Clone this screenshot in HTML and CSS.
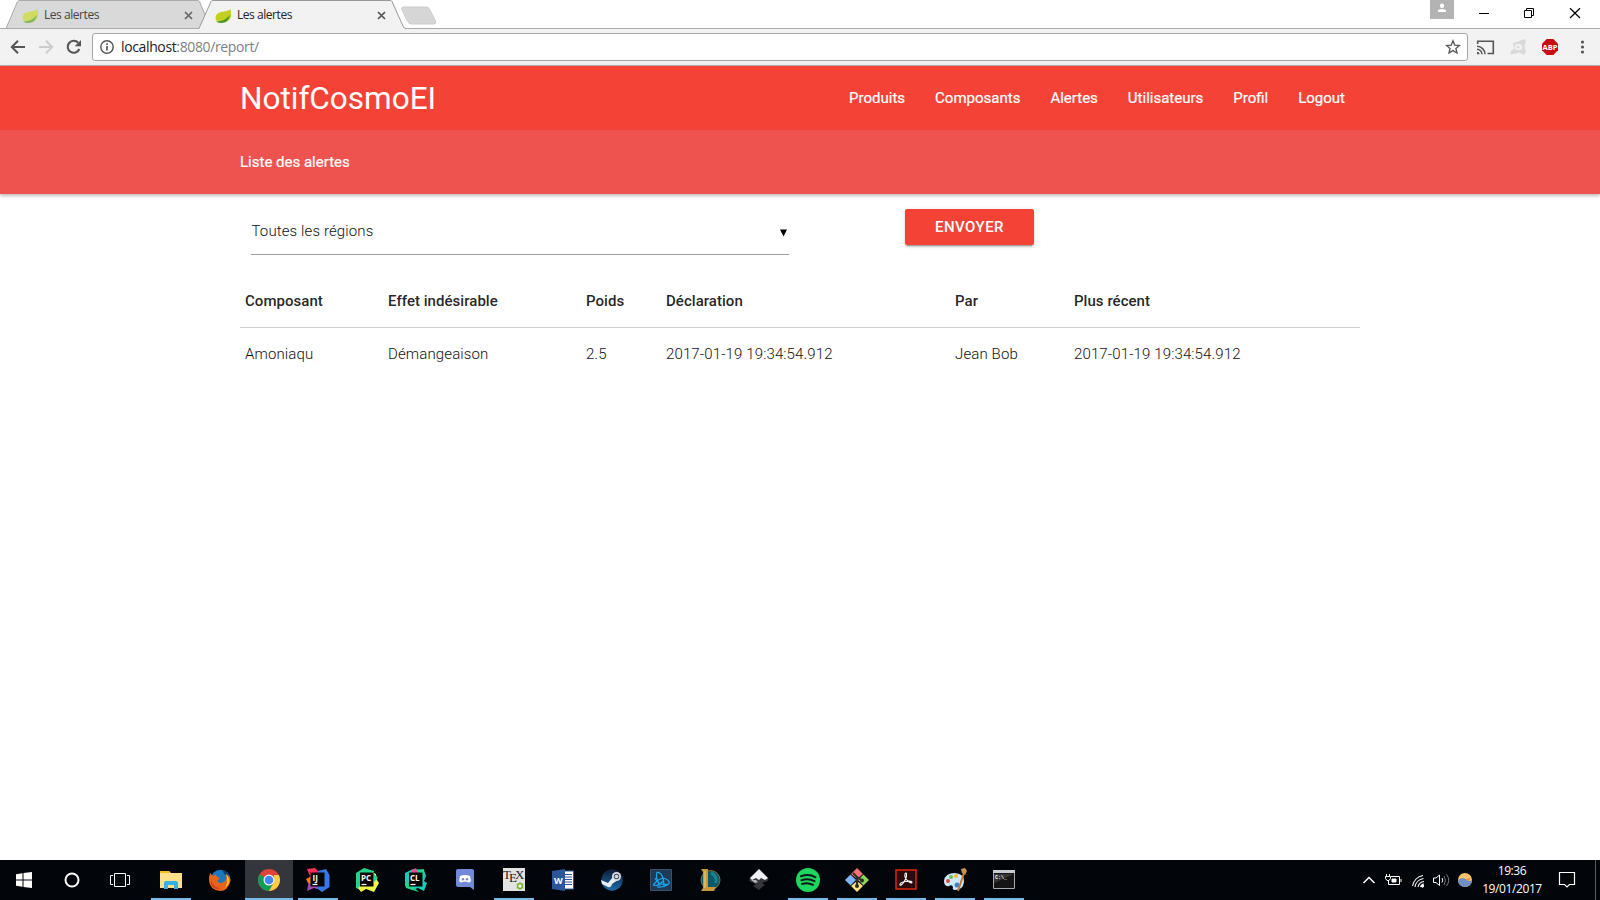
FILE: index.html
```html
<!DOCTYPE html>
<html lang="fr">
<head>
<meta charset="utf-8">
<title>Les alertes</title>
<link rel="stylesheet" href="styles.css">
</head>
<body>
<div class="browser">
  <div class="tabstrip">
    <svg class="tab-shapes" width="450" height="29" viewBox="0 0 450 29">
      <path d="M0 28.5H450" stroke="#aaa"/>
      <path d="M401.500 9q0-2 2-2h23q2 0 3 2l6 12q1 3-2 3h-22q-3 0-4-3z" fill="#d6d6d6" stroke="#ccc"/>
      <path d="M6 28.500L17.500 1.500Q18 .5 20 .5H197Q199 .5 199.500 1.500L208 22L201 28.500z" fill="#d9d9d9" stroke="#aaa"/>
      <path d="M199 28.500L211 1.500Q211.500 .5 213 .5H390Q391.500 .5 392 1.500L403 26Q404 28.500 406 28.500V30H199z" fill="#f2f2f2"/>
      <path d="M199 28.500L211 1.500Q211.500 .5 213 .5H390Q391.500 .5 392 1.500L403 26Q404 28.500 406 28.500" fill="none" stroke="#999"/>
    </svg>
    <div class="tab tab-back">
      <svg class="leaf" width="17" height="16" viewBox="0 0 17 16"><path d="M15.500 1C14 3 10 3 6 4C-1 6 0 12 2 13C8 16 14 14 15.800 9Q16.600 5 15.500 1z" fill="#d0dc62"/><path d="M1 13.500Q9 14 15 7Q14 14 7 15Q3 15 1 13.500z" fill="#84b763"/></svg>
      <span class="tab-title">Les alertes</span>
      <svg class="tab-close" width="9" height="9" viewBox="0 0 9 9"><path d="M1 1L8 8M8 1L1 8" stroke="#666" stroke-width="1.700"/></svg>
    </div>
    <div class="tab">
      <svg class="leaf" width="17" height="16" viewBox="0 0 17 16"><path d="M15.500 1C14 3 10 3 6 4C-1 6 0 12 2 13C8 16 14 14 15.800 9Q16.600 5 15.500 1z" fill="#c3d020"/><path d="M1 13.500Q9 14 15 7Q14 14 7 15Q3 15 1 13.500z" fill="#4c9a25"/></svg>
      <span class="tab-title">Les alertes</span>
      <svg class="tab-close" width="9" height="9" viewBox="0 0 9 9"><path d="M1 1L8 8M8 1L1 8" stroke="#555" stroke-width="1.700"/></svg>
    </div>
    <div class="window-controls">
      <svg width="170" height="28" viewBox="0 0 170 28">
        <path d="M0 0H24V19H0z" fill="#b3b3b3"/><circle cx="12" cy="5.800" r="2.200" fill="#fff"/><path d="M8 12V10.500Q8.500 9 12 9Q15.500 9 16 10.500V12z" fill="#fff"/>
        <path d="M49 13.500H59" stroke="#000"/>
        <path d="M94.500 10.500H101.500V17.500H94.500zM96.500 10V8.500H103.500V15.500H102" fill="none" stroke="#000"/>
        <path d="M140 8.200L150 18M150 8.200L140 18" stroke="#000" stroke-width="1.200"/>
      </svg>
    </div>
  </div>
  <div class="toolbar">
    <svg class="nav-icons" width="92" height="36" viewBox="0 0 92 36">
      <path d="M25 18H12.500M18 11.800L11.800 18L18 24.200" fill="none" stroke="#555" stroke-width="2"/>
      <path d="M39 18H51.500M46 11.800L52.200 18L46 24.200" fill="none" stroke="#ccc" stroke-width="2"/>
      <path d="M79.300 20A6 6 0 1 1 78.200 13.800" fill="none" stroke="#555" stroke-width="2.100"/><path d="M81 11V17.300H74.700z" fill="#555"/>
    </svg>
    <div class="omnibox">
      <svg width="14" height="14" viewBox="0 0 14 14"><circle cx="7" cy="7" r="6.200" fill="none" stroke="#555" stroke-width="1.400"/><path d="M7 6V10.500M7 3.300V5" stroke="#555" stroke-width="1.700"/></svg>
      <span class="url"><span class="host">localhost</span>:8080/report/</span>
      <svg class="star" width="16" height="16" viewBox="0 0 16 16"><path d="M8 1.800L9.800 6.100L14.400 6.500L10.900 9.500L12 14L8 11.600L4 14L5.100 9.500L1.600 6.500L6.200 6.100z" fill="none" stroke="#555" stroke-width="1.300"/></svg>
    </div>
    <svg class="extensions" width="132" height="36" viewBox="0 0 132 36">
      <path d="M9.700 15V12.300H25.300V24.500H19.500" fill="none" stroke="#555" stroke-width="1.600"/><path d="M9 17.300A8 8 0 0 1 17 25.300M9 20.200A5 5 0 0 1 14 25.300" fill="none" stroke="#555" stroke-width="1.500"/><path d="M9 22.800A2.500 2.500 0 0 1 11.500 25.300H9z" fill="#555"/>
      <path d="M45 14L50 12.500L56 10L58 12L56.500 17L58 23L56 26L51 23.500L46 25L42.500 25.500L43 22L46 20z" fill="#dadada"/><circle cx="50" cy="18" r="2.300" fill="none" stroke="#f6f6f6" stroke-width="1.400"/><path d="M53 15.500V20.500" stroke="#f6f6f6" stroke-width="1.400"/>
      <path d="M78.700 10H85.300L90 14.700V21.300L85.300 26H78.700L74 21.300V14.700z" fill="#c70d0d"/>
      <text x="82" y="21" text-anchor="middle" class="abp">ABP</text>
      <g fill="#555"><circle cx="114.500" cy="13" r="1.600"/><circle cx="114.500" cy="18" r="1.600"/><circle cx="114.500" cy="23" r="1.600"/></g>
    </svg>
  </div>
</div>

<div class="page">
  <header class="header">
    <nav class="navbar"><div class="container navbar-inner">
      <a class="logo">NotifCosmoEI</a>
      <ul class="menu"><li>Produits</li><li>Composants</li><li>Alertes</li><li>Utilisateurs</li><li>Profil</li><li>Logout</li></ul>
    </div></nav>
    <div class="subbar"><div class="container">Liste des alertes</div></div>
  </header>
  <main class="container">
    <form class="filters">
      <div class="select"><span>Toutes les régions</span><svg width="7" height="8" viewBox="0 0 7 8"><path d="M0 .5H7L3.500 7.500z"/></svg></div>
      <button type="button" class="send">ENVOYER</button>
    </form>
    <table class="alerts">
      <colgroup><col class="c1"><col class="c2"><col class="c3"><col class="c4"><col class="c5"><col></colgroup>
      <thead><tr><th>Composant</th><th>Effet indésirable</th><th>Poids</th><th>Déclaration</th><th>Par</th><th>Plus récent</th></tr></thead>
      <tbody><tr><td>Amoniaqu</td><td>Démangeaison</td><td>2.5</td><td>2017-01-19 19:34:54.912</td><td>Jean Bob</td><td>2017-01-19 19:34:54.912</td></tr></tbody>
    </table>
  </main>
</div>

<footer class="taskbar">
  <div class="system">
    <div class="item"><svg width="24" height="24" viewBox="0 0 24 24" fill="#fff"><path d="M4 6.200L10.500 5.300V11.500H4zM11.500 5.100L20 4V11.500H11.500zM4 12.500H10.500V18.700L4 17.800zM11.500 12.500H20V20L11.500 18.900z"/></svg></div>
    <div class="item"><svg width="24" height="24" viewBox="0 0 24 24"><circle cx="12" cy="12" r="6.500" fill="none" stroke="#fff" stroke-width="2"/></svg></div>
    <div class="item"><svg width="24" height="24" viewBox="0 0 24 24" fill="none" stroke="#fff"><path d="M6.500 5.500H17.500V18.500H6.500zM5 7.500H2.500V16.500H5M19 7.500H21.500V16.500H19"/></svg></div>
  </div>
  <div class="apps">
    <div class="item open"><svg width="24" height="24" viewBox="0 0 24 24"><path d="M1 3H10L12 5H23V20H1z" fill="#ffe08a"/><path d="M1 3H10L11 5H1z" fill="#f2bd20"/><path d="M5 21V15Q5 13 7 13H17Q19 13 19 15V21H15V17H9V21z" fill="#35b1e8"/></svg></div>
    <div class="item"><svg width="24" height="24" viewBox="0 0 24 24"><circle cx="12.500" cy="11.500" r="9.800" fill="#1778bd"/><path d="M14 2Q20 3 21 9L17 7z" fill="#123e78"/><path d="M2 5L5 8L8 6Q8 9 12 10L9 13Q13 17 17 13Q20 9 17 6Q23 8 22.500 13Q20 23 12 23Q2 22 1 13Q1 8 2 5z" fill="#e7651b"/><path d="M18 6Q25 13 17 20Q21 14 18 6z" fill="#ffc534"/><path d="M3 12Q5 20 13 20Q7 23 3 17z" fill="#d6401d"/></svg></div>
    <div class="item open active"><svg width="24" height="24" viewBox="0 0 24 24"><circle cx="12" cy="12" r="11" fill="#db4437"/><path d="M12 12L2.500 6.500A11 11 0 0 0 12 23L17 15z" fill="#0f9d58"/><path d="M12 23L17 14V7H21.800A11 11 0 0 1 12 23z" fill="#ffcd40"/><circle cx="12" cy="12" r="5.500" fill="#f1f1f1"/><circle cx="12" cy="12" r="4.300" fill="#4285f4"/></svg></div>
    <div class="item open"><svg width="24" height="24" viewBox="0 0 24 24"><path d="M1 1L9 0L13 4V12H2L4 8z" fill="#fc3159"/><path d="M12 3L20 1L23.500 7V19L16 24L9 19L12 10z" fill="#3678e8"/><path d="M3 11L12 14L11 21L8 20L1 23L2 18z" fill="#a54ab4"/><path d="M0 11L6 8V16L2 15z" fill="#f97a12"/><path d="M4.500 4.500H18.500V18.500H4.500z" fill="#080406"/><path d="M6.500 16.500H11.500" stroke="#fff" stroke-width="1.200"/><text x="6.500" y="12.500" class="ide">IJ</text></svg></div>
    <div class="item"><svg width="24" height="24" viewBox="0 0 24 24"><path d="M1 5L9 0L19 3L18 12L6 22L1 20z" fill="#20d789"/><path d="M17 4L21 6L22 12L24 15L19 24L11 21L6 24L3 20L12 12z" fill="#eef54a"/><path d="M18 5L23 10L19 14z" fill="#21d789"/><path d="M5 4.500H18.500V18.500H5z" fill="#080406"/><path d="M6.500 16.500H11.500" stroke="#fff" stroke-width="1.200"/><text x="6" y="12.500" class="ide">PC</text></svg></div>
    <div class="item"><svg width="24" height="24" viewBox="0 0 24 24"><path d="M1 5L9 1L20 2L22 8L20 13L23 15L20 23L14 20L8 22L1 18z" fill="#16cfb8"/><path d="M8 2L12 0L14 5H8z" fill="#e64a93"/><path d="M1 14L7 17L15 24L2 20zM13 2L20 1L20 9z" fill="#20d789"/><path d="M5 4.500H18.500V18.500H5z" fill="#080406"/><path d="M6.500 16.500H11.500" stroke="#fff" stroke-width="1.200"/><text x="6" y="12.500" class="ide">CL</text></svg></div>
    <div class="item"><svg width="24" height="24" viewBox="0 0 24 24"><path d="M5 1H19Q21 1 21 3V22L17 19H5Q3 19 3 17V3Q3 1 5 1z" fill="#7289da"/><path d="M7 8Q12 5.800 17 8L18 13Q16 15.500 14.500 14L12 13.500L9.500 14Q8 15.500 6 13z" fill="#fff"/><circle cx="10" cy="11.300" r="1.200" fill="#7289da"/><circle cx="14" cy="11.300" r="1.200" fill="#7289da"/></svg></div>
    <div class="item open"><svg width="24" height="24" viewBox="0 0 24 24"><path d="M1 0H23V23H1z" fill="#e3e3e3"/><text x="1" y="11" class="tex">T</text><text x="7" y="14" class="tex">E</text><text x="13" y="11" class="tex">X</text><circle cx="18" cy="18" r="2.500" fill="#fff" stroke="#79b52b" stroke-width="1.500"/><path d="M18 14V22M14.500 16L21.500 20M21.500 16L14.500 20" stroke="#79b52b"/><circle cx="18" cy="18" r="1.500" fill="#fff"/></svg></div>
    <div class="item"><svg width="24" height="24" viewBox="0 0 24 24"><path d="M12 3H22.500V21H12z" fill="#fff" stroke="#2b579a"/><path d="M14 6.500H21M14 9H21M14 11.500H21M14 14H21M14 16.500H21" stroke="#2b579a"/><path d="M1 3L14 1V23L1 21z" fill="#2b579a"/><text x="3" y="15.500" class="word">W</text></svg></div>
    <div class="item"><svg width="24" height="24" viewBox="0 0 24 24"><defs><linearGradient id="steam" x2="0" y2="1"><stop stop-color="#101a36"/><stop offset="1" stop-color="#1a6dab"/></linearGradient></defs><circle cx="12" cy="12" r="10.700" fill="url(#steam)"/><path d="M1 12L8 15L13 9L18 12L12 16Q11 20 8 19L2 16z" fill="#e8edf2"/><circle cx="16.500" cy="8.500" r="4.500" fill="#ddd"/><circle cx="16.500" cy="8.500" r="2.700" fill="#314867"/><circle cx="16.500" cy="8.500" r="1.800" fill="#ddd"/></svg></div>
    <div class="item"><svg width="24" height="24" viewBox="0 0 24 24"><path d="M1.500 1.500H22.500V22.500H1.500z" fill="#203957" stroke="#3b506a"/><g fill="none" stroke="#18a7ed" stroke-width="1.200"><path d="M8 4Q15 5 15 18M8 4Q6 10 11 18"/><path d="M4 17Q12 8 17 11Q21 13 20 16M4 17Q9 19 14 13"/><path d="M6 10Q9 18 20 16M8 19Q14 20 20 16"/></g></svg></div>
    <div class="item"><svg width="24" height="24" viewBox="0 0 24 24"><circle cx="12.500" cy="12" r="9.500" fill="#0b5967" stroke="#8a7035"/><path d="M13 5Q19 7 18 15" fill="none" stroke="#178591" stroke-width="3"/><path d="M3 1H10V19H18L16 23H3L5 20V4z" fill="#c8963b"/><path d="M7 3V20" stroke="#ecc970" stroke-width="1.200"/></svg></div>
    <div class="item"><svg width="24" height="24" viewBox="0 0 24 24"><path d="M12 1L21 10Q23 13 17 14Q14 15 18 17L14 20L12 22L9 20L6 18Q10 17 7 15Q0 13 3 10z" fill="#34363b"/><path d="M12 1L21 10L18 12L14 10L12 12L9 10L5 12L3 10z" fill="#eef0f5"/><path d="M4 12L9 12L11 14L8 15z" fill="#aeb4bc"/></svg></div>
    <div class="item open"><svg width="24" height="24" viewBox="0 0 24 24"><circle cx="12" cy="12" r="12" fill="#1ed760"/><path d="M5 8.300Q13 5.500 19.500 9.300M5.500 12.300Q12.500 10 18.500 13.200M6 16Q12 14 17 16.800" fill="none" stroke="#10181a" stroke-width="2" stroke-linecap="round"/></svg></div>
    <div class="item open"><svg width="24" height="24" viewBox="0 0 24 24"><path d="M12 0L18 6L12 11L6 6z" fill="#f77075"/><path d="M5.500 6.500L11 12L5.500 17.500L0 12z" fill="#80b3ff"/><path d="M18.500 6.500L24 12L18.500 17.500L13 12z" fill="#8ed15d"/><path d="M12 13L18 18L12 24L6 18z" fill="#ffe27a"/><path d="M8 5L12 9V18M12 9L17 12.500" fill="none" stroke="#302c29" stroke-width="2"/><circle cx="12" cy="18" r="2" fill="#302c29"/><circle cx="17" cy="12.500" r="2" fill="#302c29"/></svg></div>
    <div class="item open"><svg width="24" height="24" viewBox="0 0 24 24"><path d="M2 2H22V21H2z" fill="#2b0b0b" stroke="#e2260f" stroke-width="1.500"/><path d="M6 17Q5 15 11 13.500Q17 12.500 18 14Q18 16 14.500 13.500Q10 10 11 6Q12 4 12.500 6Q13 9 10 14Q7 18 6 17z" fill="none" stroke="#fff" stroke-width="1.100"/></svg></div>
    <div class="item open"><svg width="24" height="24" viewBox="0 0 24 24"><path d="M1 13Q2 5 12 5Q22 6 21 14Q20 22 12 22Q9 22 10 19Q9 16 6 18Q1 19 1 13z" fill="#cde8fa"/><circle cx="5" cy="13" r="2" fill="#d64c38"/><circle cx="8" cy="9" r="2" fill="#6fbd46"/><circle cx="13" cy="8" r="2" fill="#f3b434"/><circle cx="14" cy="17" r="2.500" fill="#3d85ce"/><path d="M21 5L15 23" stroke="#c8792d" stroke-width="2"/><path d="M19 5L18 1L22 0L24 3L22 7z" fill="#c99152"/></svg></div>
    <div class="item open"><svg width="24" height="24" viewBox="0 0 24 24"><path d="M1.500 2.500H22.500V20.500H1.500z" fill="#151515" stroke="#aaa"/><path d="M1 2H23V5H1z" fill="#c8ccd0"/><path d="M2 6H22L2 15z" fill="#353535"/><text x="3" y="11" class="cmd">C:\_</text></svg></div>
  </div>
  <div class="tray">
    <svg width="126" height="40" viewBox="0 0 126 40" fill="none" stroke="#fff">
      <path d="M3.500 23L9 17.500L14.500 23" stroke-width="1.500"/>
      <path d="M31 16.500H39.500V24.500H28.500V21M41 19V22"/><path d="M32 19H36V22H32z" fill="#fff"/><path d="M26.500 14V16M29.500 14V16M25.500 16.500H30.500V18.500L29 20.500H27L25.500 18.500z"/>
      <path d="M52.500 26A13 13 0 0 1 63 15.500M55 27A10 10 0 0 1 63.500 18.500M58 27A7 7 0 0 1 64 21.500M60.500 27A4 4 0 0 1 64 24" stroke-width="1.100"/><circle cx="62.500" cy="26" r="1.200" fill="#fff"/>
      <path d="M73.500 18H76L79.500 15V25.500L76 22.500H73.500zM82 18Q83.500 20 82 22.500"/><path d="M84 16Q87 20 84 25M86.500 14.500Q91 20 86.500 26" stroke="#777"/>
      <circle cx="105" cy="20" r="7" fill="#ffc36b" stroke="none"/><path d="M98 20Q103 16 107 20Q109 22 112 20A7 7 0 0 1 98 20z" fill="#6f8fc4" stroke="none"/><path d="M106 19L110 18L109 21z" fill="#f18b22" stroke="none"/>
    </svg>
    <div class="clock"><span>19:36</span><span>19/01/2017</span></div>
    <svg class="notice" width="18" height="18" viewBox="0 0 18 18"><path d="M1.500 1.500H16.500V13.500H11.500L9 16L6.500 13.500H1.500z" fill="none" stroke="#fff" stroke-width="1.200"/></svg>
    <div class="peek"></div>
  </div>
</footer>
</body>
</html>
```
FILE: styles.css
```css
* { box-sizing: border-box; }
body { margin: 0; width: 1600px; height: 900px; overflow: hidden; display: flex; flex-direction: column; background: #fff; font: 15px/1.5 Roboto, sans-serif; color: rgba(0,0,0,.87); }
svg { display: block; flex: none; }

.browser { font-family: "Open Sans", sans-serif; }
.tabstrip { position: relative; height: 29px; display: flex; border-bottom: 1px solid #aaa; }
.tab-shapes { position: absolute; left: 0; top: 0; }
.tab { position: relative; width: 193px; height: 29px; padding-left: 22px; display: flex; align-items: center; font-size: 12px; color: #222; }
.tab-back { color: #444; }
.tab-title { margin-left: 5px; width: 141px; letter-spacing: -.45px; }
.leaf { margin-top: 2px; }
.tab-close { margin-top: 1px; }
.window-controls { margin-left: auto; }
.toolbar { height: 37px; display: flex; align-items: center; background: #f2f2f2; border-bottom: 1px solid #b5b5b5; }
.omnibox { width: 1376px; height: 28px; border: 1px solid #a6a6a6; border-radius: 3px; background: #fff; display: flex; align-items: center; padding: 0 6px 0 7px; }
.url { margin-left: 7px; font-size: 14px; letter-spacing: -.37px; color: #808080; line-height: 20px; }
.host { color: #222; }
.star { margin-left: auto; }
.abp { font: bold 7.5px "Open Sans", sans-serif; fill: #fff; }

.page { flex: 1; }
.container { width: 1120px; margin: 0 auto; }
.header { color: #fff; box-shadow: 0 2px 3px 0 rgba(0,0,0,.18), 0 1px 5px 0 rgba(0,0,0,.12); }
.navbar { height: 64px; background: #f44336; }
.navbar-inner { display: flex; justify-content: space-between; line-height: 64px; }
.logo { font-size: 31.5px; line-height: 66px; height: 64px; }
.menu { list-style: none; margin: 0; padding: 0; display: flex; -webkit-text-stroke: .2px #fff; }
.menu li { padding: 0 15px; }
.subbar { height: 64px; line-height: 64px; background: #ef5350; -webkit-text-stroke: .2px #fff; }
.filters { display: flex; align-items: flex-start; padding: 15px 0 0 11px; }
.select { width: 538px; height: 46px; margin-right: 116px; padding: 0 2px 0 .5px; border-bottom: 1px solid #9e9e9e; display: flex; justify-content: space-between; align-items: center; font-weight: 300; letter-spacing: .12px; color: #111; }
.select span { margin-top: -1px; }
.select svg { margin-top: 2px; }
.send { width: 129px; height: 36px; border: 0; border-radius: 2px; padding: 0; background: #f44336; color: #fff; font: 500 15px Roboto, sans-serif; letter-spacing: .45px; box-shadow: 0 2px 2px 0 rgba(0,0,0,.14), 0 1px 5px 0 rgba(0,0,0,.12), 0 3px 1px -2px rgba(0,0,0,.2); }
.alerts { width: 1120px; margin-top: 20px; border-collapse: collapse; table-layout: fixed; text-align: left; }
.alerts th, .alerts td { height: 52px; padding: 0 5px; white-space: nowrap; }
.alerts th { font-weight: 500; border-bottom: 1px solid #d0d0d0; padding-top: 1px; letter-spacing: .04px; }
.alerts td { font-weight: 300; letter-spacing: .13px; color: #111; padding-top: 2px; }
.c1 { width: 143px; } .c2 { width: 198px; } .c3 { width: 80px; } .c4 { width: 289px; } .c5 { width: 119px; }

.taskbar { height: 40px; background: #02050a; display: flex; color: #fff; }
.system, .apps { display: flex; }
.apps { margin-left: 3px; gap: 1px; }
.item { width: 48px; height: 40px; padding-top: 8px; display: flex; flex-direction: column; align-items: center; }
.open::after { content: ""; width: 40px; height: 2px; margin-top: 6px; background: #76b9ed; }
.active { background: #35363b; }
.active::after { width: 48px; }
.ide { font: bold 8px "Open Sans", sans-serif; fill: #fff; }
.tex { font: 13px "Liberation Serif", serif; fill: #222; }
.word { font: bold 9px "Open Sans", sans-serif; fill: #fff; }
.cmd { font: bold 5px "Liberation Mono", monospace; fill: #fff; }
.tray { margin-left: auto; display: flex; align-items: center; }
.clock { width: 62px; margin-left: -5px; display: flex; flex-direction: column; align-items: center; font: 12px/18px "Open Sans", sans-serif; letter-spacing: -.4px; }
.notice { margin: 0 19px 0 15px; }
.peek { width: 5px; height: 40px; border-left: 1px solid #5a5c60; }
```
